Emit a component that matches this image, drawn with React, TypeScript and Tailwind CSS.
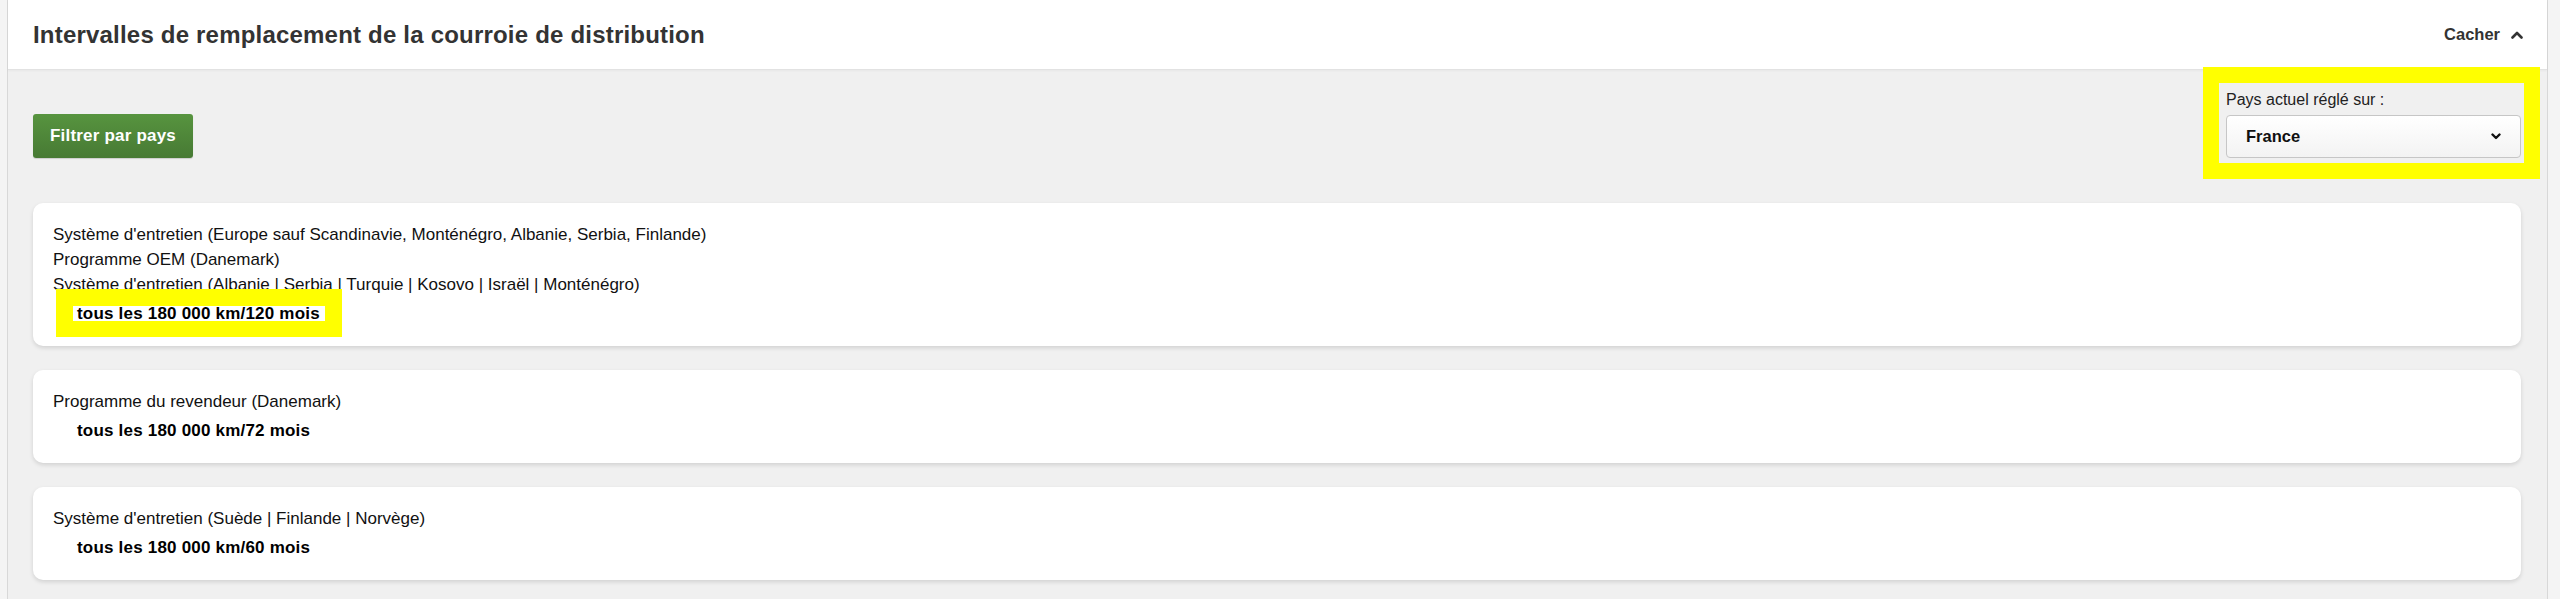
import React from "react";

function ChevronUp() {
  return (
    <svg width="12" height="8" viewBox="0 0 12 8" className="ml-[11px]">
      <polyline points="1.5,6.5 6,2 10.5,6.5" fill="none" stroke="#333" strokeWidth="2.6" strokeLinecap="round" strokeLinejoin="round" />
    </svg>
  );
}

function ChevronDown() {
  return (
    <svg width="10" height="7" viewBox="0 0 10 7">
      <polyline points="1.5,1.5 5,5 8.5,1.5" fill="none" stroke="#111" strokeWidth="2.4" strokeLinecap="round" strokeLinejoin="round" />
    </svg>
  );
}

type Entry = { lines: string[]; value: string; highlight?: boolean };

const entries: Entry[] = [
  {
    lines: [
      "Système d'entretien (Europe sauf Scandinavie, Monténégro, Albanie, Serbia, Finlande)",
      "Programme OEM (Danemark)",
      "Système d'entretien (Albanie | Serbia | Turquie | Kosovo | Israël | Monténégro)",
    ],
    value: "tous les 180 000 km/120 mois",
    highlight: true,
  },
  {
    lines: ["Programme du revendeur (Danemark)"],
    value: "tous les 180 000 km/72 mois",
  },
  {
    lines: ["Système d'entretien (Suède | Finlande | Norvège)"],
    value: "tous les 180 000 km/60 mois",
  },
];

function Card({ e }: { e: Entry }) {
  return (
    <div className="bg-white rounded-[10px] shadow-[0_2px_4px_rgba(0,0,0,0.13)] pl-[20px] pr-[20px] pt-[19px] pb-[20px] text-[17px] leading-[25px] text-[#111]">
      {e.lines.map((l, i) => (
        <div key={i}>{l}</div>
      ))}
      <div className="mt-[4px] pl-[24px] font-bold tracking-[0.2px] text-black">
        <span className="relative inline-block">
          {e.highlight && (
            <>
              <span className="absolute left-[-21px] top-[-12px] w-[286px] h-[48px] bg-[#ffff00]" />
              <span className="absolute left-[-4px] top-[5px] w-[252px] h-[15px] bg-white" />
            </>
          )}
          <span className="relative">{e.value}</span>
        </span>
      </div>
    </div>
  );
}

export default function App() {
  return (
    <div className="min-h-[599px] bg-[#f4f4f4] font-['Liberation_Sans',Arial,sans-serif]">
      <div className="ml-[7px] w-[2541px] min-h-[599px] border-x border-[#d8d8d8] bg-[#f0f0f0]">
        <div className="h-[70px] bg-white border-b border-[#e2e2e2] shadow-[0_1px_2px_rgba(0,0,0,0.04)] flex items-center justify-between pl-[25px] pr-[24px]">
          <h1 className="text-[24px] tracking-[0.2px] font-bold text-[#333]">Intervalles de remplacement de la courroie de distribution</h1>
          <div className="flex items-center text-[16.5px] font-bold text-[#333]">
            Cacher
            <ChevronUp />
          </div>
        </div>
        <div className="pl-[25px] pr-[26px] pt-[20px]">
          <div className="flex items-end justify-between">
            <button className="w-[160px] h-[44px] rounded-[3px] bg-gradient-to-b from-[#57943f] to-[#477a34] text-white font-bold text-[17px] tracking-[0.2px] shadow-[0_1px_1px_rgba(0,0,0,0.15)]">
              Filtrer par pays
            </button>
            <div className="relative w-[295px]">
              <div className="absolute left-[-23px] top-[-23px] right-[-19px] bottom-[-21px] border-[16px] border-[#ffff00]" />
              <div className="text-[16px] leading-[20px] text-[#222]">Pays actuel réglé sur :</div>
              <div className="mt-[5px] h-[43px] rounded-[4px] border border-[#c6c6c6] bg-gradient-to-b from-white to-[#f3f3f3] flex items-center justify-between pl-[19px] pr-[19px]">
                <span className="text-[16.5px] font-bold text-[#111]">France</span>
                <ChevronDown />
              </div>
            </div>
          </div>
          <div className="mt-[45px] flex flex-col gap-[24px]">
            {entries.map((e, i) => (
              <Card key={i} e={e} />
            ))}
          </div>
        </div>
      </div>
    </div>
  );
}
